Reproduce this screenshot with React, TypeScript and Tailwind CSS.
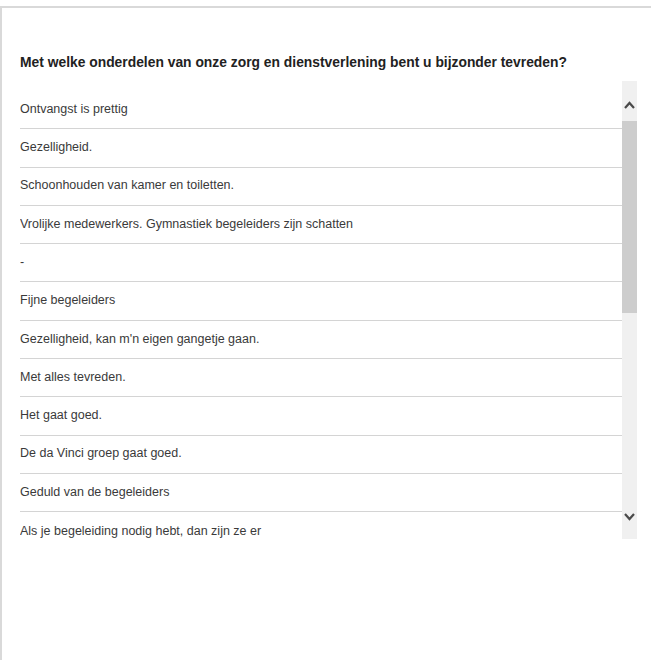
import React from "react";

const answers = [
  "Ontvangst is prettig",
  "Gezelligheid.",
  "Schoonhouden van kamer en toiletten.",
  "Vrolijke medewerkers. Gymnastiek begeleiders zijn schatten",
  "-",
  "Fijne begeleiders",
  "Gezelligheid, kan m'n eigen gangetje gaan.",
  "Met alles tevreden.",
  "Het gaat goed.",
  "De da Vinci groep gaat goed.",
  "Geduld van de begeleiders",
  "Als je begeleiding nodig hebt, dan zijn ze er",
];

function Chevron({ up }: { up: boolean }) {
  return (
    <svg width="11" height="8" viewBox="0 0 11 8" className="block">
      <path
        d={up ? "M1 7 L5.5 2 L10 7" : "M1 1 L5.5 6 L10 1"}
        fill="none"
        stroke="#4a4a4a"
        strokeWidth="2.2"
      />
    </svg>
  );
}

export default function App() {
  return (
    <div
      className="w-[651px] h-[660px] bg-white pt-[6px] overflow-hidden"
      style={{ fontFamily: '"Liberation Sans", Arial, sans-serif' }}
    >
      <div className="h-full border-l-2 border-t-2 border-[#d9d9d9] pl-[18px] pt-[44px]">
        <h2 className="text-[13.85px] leading-[20px] font-bold text-[#222]">
          Met welke onderdelen van onze zorg en dienstverlening bent u bijzonder tevreden?
        </h2>
        <div className="mt-[9px] flex h-[458px] w-[617px]">
          <div className="flex-1 overflow-hidden pt-[10px]">
            {answers.map((a, i) => (
              <div
                key={i}
                className={`h-[38.3px] flex items-center text-[12.5px] text-[#3a3a3a] ${
                  i < answers.length - 1 ? "border-b-[1.5px] border-[#d4d4d4]" : ""
                }`}
              >
                <span className="-mt-[1px]">{a}</span>
              </div>
            ))}
          </div>
          <div className="w-[15px] bg-[#f0f0f0] flex flex-col">
            <div className="h-[40px] flex justify-center pt-[20px]">
              <Chevron up />
            </div>
            <div className="h-[192px] bg-[#cdcdcd]" />
            <div className="flex-1" />
            <div className="h-[40px] flex justify-center pt-[14px]">
              <Chevron up={false} />
            </div>
          </div>
        </div>
      </div>
    </div>
  );
}
